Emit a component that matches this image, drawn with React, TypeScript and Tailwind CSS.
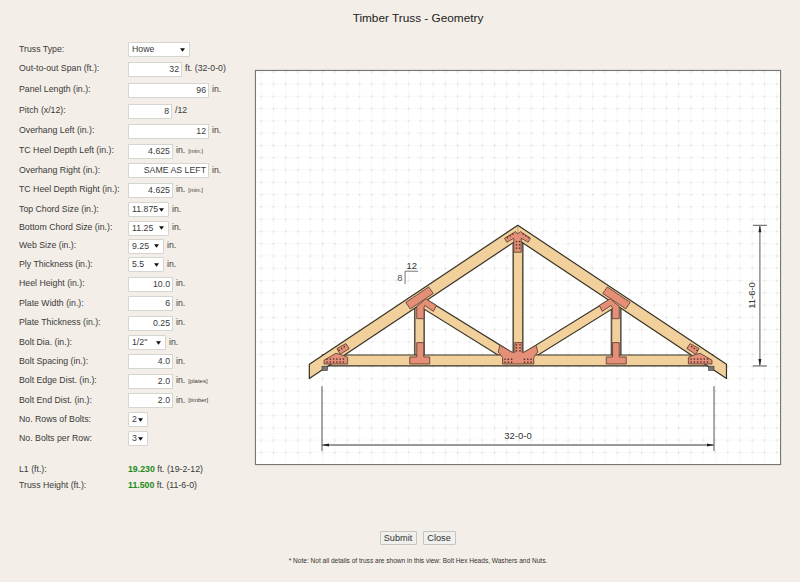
const font = "font-['Liberation_Sans',Arial,sans-serif]";

type Row = {
  label: string;
  h: string;
  kind: "input" | "select";
  value: string;
  w: string;
  unit: string;
  note?: string;
};

const rows: Row[] = [
  { label: "Truss Type:", h: "h-[19px]", kind: "select", value: "Howe", w: "w-[62px]", unit: "" },
  { label: "Out-to-out Span (ft.):", h: "h-[20px]", kind: "input", value: "32", w: "w-[54px]", unit: "ft. (32-0-0)" },
  { label: "Panel Length (in.):", h: "h-[22px]", kind: "input", value: "96", w: "w-[81px]", unit: "in." },
  { label: "Pitch (x/12):", h: "h-[20px]", kind: "input", value: "8", w: "w-[44px]", unit: "/12" },
  { label: "Overhang Left (in.):", h: "h-[20px]", kind: "input", value: "12", w: "w-[81px]", unit: "in." },
  { label: "TC Heel Depth Left (in.):", h: "h-[20px]", kind: "input", value: "4.625", w: "w-[45px]", unit: "in.", note: "[min.]" },
  { label: "Overhang Right (in.):", h: "h-[19px]", kind: "input", value: "SAME AS LEFT", w: "w-[81px]", unit: "in." },
  { label: "TC Heel Depth Right (in.):", h: "h-[20px]", kind: "input", value: "4.625", w: "w-[45px]", unit: "in.", note: "[min.]" },
  { label: "Top Chord Size (in.):", h: "h-[19px]", kind: "select", value: "11.875", w: "w-[41px]", unit: "in." },
  { label: "Bottom Chord Size (in.):", h: "h-[18px]", kind: "select", value: "11.25", w: "w-[41px]", unit: "in." },
  { label: "Web Size (in.):", h: "h-[18px]", kind: "select", value: "9.25", w: "w-[36px]", unit: "in." },
  { label: "Ply Thickness (in.):", h: "h-[19px]", kind: "select", value: "5.5", w: "w-[36px]", unit: "in." },
  { label: "Heel Height (in.):", h: "h-[20px]", kind: "input", value: "10.0", w: "w-[45px]", unit: "in." },
  { label: "Plate Width (in.):", h: "h-[19px]", kind: "input", value: "6", w: "w-[45px]", unit: "in." },
  { label: "Plate Thickness (in.):", h: "h-[20px]", kind: "input", value: "0.25", w: "w-[45px]", unit: "in." },
  { label: "Bolt Dia. (in.):", h: "h-[19px]", kind: "select", value: '1/2"', w: "w-[38px]", unit: "in." },
  { label: "Bolt Spacing (in.):", h: "h-[19px]", kind: "input", value: "4.0", w: "w-[45px]", unit: "in." },
  { label: "Bolt Edge Dist. (in.):", h: "h-[20px]", kind: "input", value: "2.0", w: "w-[45px]", unit: "in.", note: "[plates]" },
  { label: "Bolt End Dist. (in.):", h: "h-[19px]", kind: "input", value: "2.0", w: "w-[45px]", unit: "in.", note: "[timber]" },
  { label: "No. Rows of Bolts:", h: "h-[19px]", kind: "select", value: "2", w: "w-[20px]", unit: "" },
  { label: "No. Bolts per Row:", h: "h-[19px]", kind: "select", value: "3", w: "w-[20px]", unit: "" },
];

function Field({ row }: { row: Row }) {
  return (
    <div className={`flex items-center ${row.h}`}>
      <span className="w-[109px] shrink-0 whitespace-nowrap">{row.label}</span>
      {row.kind === "input" ? (
        <div className={`${row.w} h-[15px] bg-white border border-[#d6d6d0] text-right pr-[2px] leading-[13px] whitespace-nowrap overflow-hidden`}>
          {row.value}
        </div>
      ) : (
        <div className={`${row.w} h-[15px] bg-white border border-[#d6d6d0] rounded-[1px] pl-[3px] leading-[13px] flex items-center justify-between pr-[4px]`}>
          <span>{row.value}</span>
          <svg width="5" height="4" viewBox="0 0 6 4"><path d="M0 0h6L3 4z" fill="#111" /></svg>
        </div>
      )}
      {row.unit && <span className="ml-[3px] whitespace-nowrap">{row.unit}</span>}
      {row.note && <span className="ml-[3px] text-[6px] whitespace-nowrap">{row.note}</span>}
    </div>
  );
}

const wood = "#f2d09c";
const line = "#353228";
const plate = "#e58e78";
const plateLine = "#5e4436";
const dimFont = "Liberation Sans, Arial, sans-serif";

function Bolts({ pts }: { pts: number[][] }) {
  return (
    <g fill="#4e2f27">
      {pts.map(([x, y], i) => (
        <rect key={i} x={x - 0.7} y={y - 0.7} width="1.4" height="1.4" />
      ))}
    </g>
  );
}

function rowOf(x0: number, y: number, n: number, dx = 3.3, dy = 0) {
  return Array.from({ length: n }, (_, i) => [x0 + i * dx, y + i * dy]);
}

function Truss() {
  return (
    <svg className="block w-full h-full" viewBox="255 70 525 394">
      <defs>
        <pattern id="grid" x="321" y="365.7" width="12.31" height="12.31" patternUnits="userSpaceOnUse">
          <g fill="#ebebe8">
            <rect x="0" y="3" width="1" height="1" />
            <rect x="0" y="6" width="1" height="1" />
            <rect x="0" y="9" width="1" height="1" />
            <rect x="3" y="0" width="1" height="1" />
            <rect x="6" y="0" width="1" height="1" />
            <rect x="9" y="0" width="1" height="1" />
          </g>
          <rect x="-0.5" y="-0.5" width="2" height="2" fill="#dfdfdb" />
          <rect x="11.81" y="-0.5" width="0.5" height="2" fill="#dfdfdb" />
          <rect x="-0.5" y="11.81" width="2" height="0.5" fill="#dfdfdb" />
        </pattern>
      </defs>
      <rect x="255" y="70" width="525" height="394" fill="#fff" />
      <rect x="255" y="70" width="525" height="394" fill="url(#grid)" />

      {/* posts and diagonals */}
      <g fill={wood} stroke="#5b5547" strokeWidth="1.6">
        <rect x="512.7" y="236" width="9.6" height="119" />
        <rect x="414" y="298" width="9.4" height="57" />
        <rect x="611.2" y="298" width="9.4" height="57" />
      </g>
      <g fill={wood} stroke={line} strokeWidth="1.2">
        <polygon points="424,298 514,353.8 509,362 419,306" />
        <polygon points="611,298 521,353.8 526,362 616,306" />
        <polygon points="321.5,354.7 713,354.7 713,365.7 321.5,365.7" />
        <polygon points="308.3,364 517.3,224.7 726.5,364 726.5,378.3 517.3,239 308.3,378.3" strokeLinejoin="round" />
      </g>
      <line x1="517.3" y1="225" x2="517.3" y2="239" stroke="#8a7a5c" strokeWidth="0.5" />

      {/* bearing blocks */}
      <rect x="321" y="366" width="5.5" height="4.2" fill="#777" stroke="#333" strokeWidth="0.6" />
      <rect x="708.5" y="366" width="5.5" height="4.2" fill="#777" stroke="#333" strokeWidth="0.6" />

      {/* plates */}
      <g fill={plate} stroke={plateLine} strokeWidth="0.9" strokeLinejoin="round">
        {/* left queen post, top */}
        <polygon points="416,318.3 416,306 421,302 425,298.3 435.7,305 432.7,311 424,305 423.3,307 423.3,318.3" />
        <polygon points="405,302 428,286.5 432.5,293 409.5,308.5" />
        {/* left queen post, bottom */}
        <polygon points="416,342.3 423,342.3 423,356.7 429,356.7 429,363.7 409,363.7 409,356.7 416,356.7" />
        {/* right queen post, top */}
        <polygon points="612,318.3 612,307 610.7,305 602,311 599,305 610,298.3 614,302 619,306 619,318.3" />
        <polygon points="630,302 607,286.5 602.5,293 625.5,308.5" />
        {/* right queen post, bottom */}
        <polygon points="612.3,342.3 619,342.3 619,356.7 626,356.7 626,363.7 606,363.7 606,356.7 612.3,356.7" />
        {/* king post, bottom */}
        <polygon points="514.3,342.3 521.7,342.3 521.7,352 523.3,352 535.7,345 537.3,351.7 533.3,357.3 533.3,363.7 502,363.7 502,357.3 497.7,351.7 499.3,345 511.7,352 514.3,352" />
        {/* apex */}
        <polygon points="504,237.7 515,231 517.3,233.3 520,231 530,237.7 527.7,241.7 520.7,237.7 520.7,251.7 513.3,251.7 513.3,237.7 506.3,241.7" />
        {/* left heel */}
        <polygon points="336,348.3 345,343.3 348.3,348.3 339.3,354" />
        <polygon points="323,363.7 323,360 335,353 341,354.7 346.7,357 346.7,363.7" />
        {/* right heel */}
        <polygon points="699,348.3 690,343.3 686.7,348.3 695.7,354" />
        <polygon points="712,363.7 712,360 700,353 694,354.7 688.3,357 688.3,363.7" />
      </g>

      <Bolts pts={[
        ...rowOf(326, 358.8, 6), ...rowOf(326, 361.8, 6),
        ...rowOf(691, 358.8, 6), ...rowOf(691, 361.8, 6),
        ...rowOf(504.5, 359, 3), ...rowOf(504.5, 362, 3),
        ...rowOf(524, 359, 3), ...rowOf(524, 362, 3),
        ...rowOf(516, 344.5, 3, 0, 3), ...rowOf(519.5, 344.5, 3, 0, 3),
        ...rowOf(516, 241, 3, 0, 3.3), ...rowOf(519, 241, 3, 0, 3.3),
        ...rowOf(507, 237, 3, 2.7, -1.8), ...rowOf(528, 237, 3, -2.7, -1.8),
        ...rowOf(338, 350, 3, 2.7, -1.8), ...rowOf(697, 350, 3, -2.7, -1.8),
      ]} />

      {/* pitch mark */}
      <path d="M404.3 283.7V270.7H417.3" fill="none" stroke="#666" strokeWidth="0.9" />
      <text x="411" y="268.5" textAnchor="middle" fontSize="9.5" fill="#333" fontFamily={dimFont}>12</text>
      <text x="399" y="280.5" textAnchor="middle" fontSize="9.5" fill="#555" fontFamily={dimFont}>8</text>

      {/* span dimension */}
      <path d="M321 386V451M714 386V451" fill="none" stroke="#555" strokeWidth="1" />
      <line x1="321" y1="445" x2="714" y2="445" stroke="#777" strokeWidth="1.4" />
      <path d="M321 445l7-1.5v3zM714 445l-7-1.5v3z" fill="#222" />
      <text x="517.5" y="438.5" textAnchor="middle" fontSize="9.5" fill="#333" fontFamily={dimFont}>32-0-0</text>

      {/* height dimension */}
      <path d="M753 224.7H767M753 365.7H767" fill="none" stroke="#555" strokeWidth="1" />
      <line x1="760" y1="224.7" x2="760" y2="365.7" stroke="#888" strokeWidth="1.4" />
      <path d="M760 224.7l-1.5 7h3zM760 365.7l-1.5-7h3z" fill="#222" />
      <text x="755.5" y="295" textAnchor="middle" fontSize="9.5" fill="#333" fontFamily={dimFont} transform="rotate(-90 755.5 295)">11-6-0</text>
    </svg>
  );
}

export default function App() {
  return (
    <div className={`${font} h-[582px] w-[800px] overflow-hidden bg-[#f3eee7] text-[#3a3a3a] text-[8.75px] flex flex-col`}>
      <h1 className="h-[40px] pt-[11px] pl-[36px] text-center text-[11.8px] leading-[15px] text-[#222]">Timber Truss - Geometry</h1>
      <div className="flex h-[454px]">
        <div className="w-[255px] shrink-0 pl-[19px]">
          {rows.map((r) => (
            <Field key={r.label} row={r} />
          ))}
          <div className="mt-[14px] flex h-[16px] items-center">
            <span className="w-[109px]">L1 (ft.):</span>
            <span><b className="text-[#1b8a1b]">19.230</b> ft. (19-2-12)</span>
          </div>
          <div className="flex h-[16px] items-center">
            <span className="w-[109px]">Truss Height (ft.):</span>
            <span><b className="text-[#1b8a1b]">11.500</b> ft. (11-6-0)</span>
          </div>
        </div>
        <div className="mt-[30px] h-[395px] w-[526px] shrink-0 border border-[#777] shadow-[0_0_1px_#999]">
          <Truss />
        </div>
      </div>
      <div className="mt-[37px] flex justify-center gap-[6px] pl-[35px]">
        <button className="h-[14px] w-[37px] border border-[#c4c4c0] bg-[#f0f0ee] text-[9.2px] leading-[12px] text-[#333] rounded-[1px]">Submit</button>
        <button className="h-[14px] w-[33px] border border-[#c4c4c0] bg-[#f0f0ee] text-[9.2px] leading-[12px] text-[#333] rounded-[1px]">Close</button>
      </div>
      <p className="mt-[11px] pl-[36px] text-center text-[6.55px] leading-[10px] text-[#333]">* Note: Not all details of truss are shown in this view: Bolt Hex Heads, Washers and Nuts.</p>
    </div>
  );
}
